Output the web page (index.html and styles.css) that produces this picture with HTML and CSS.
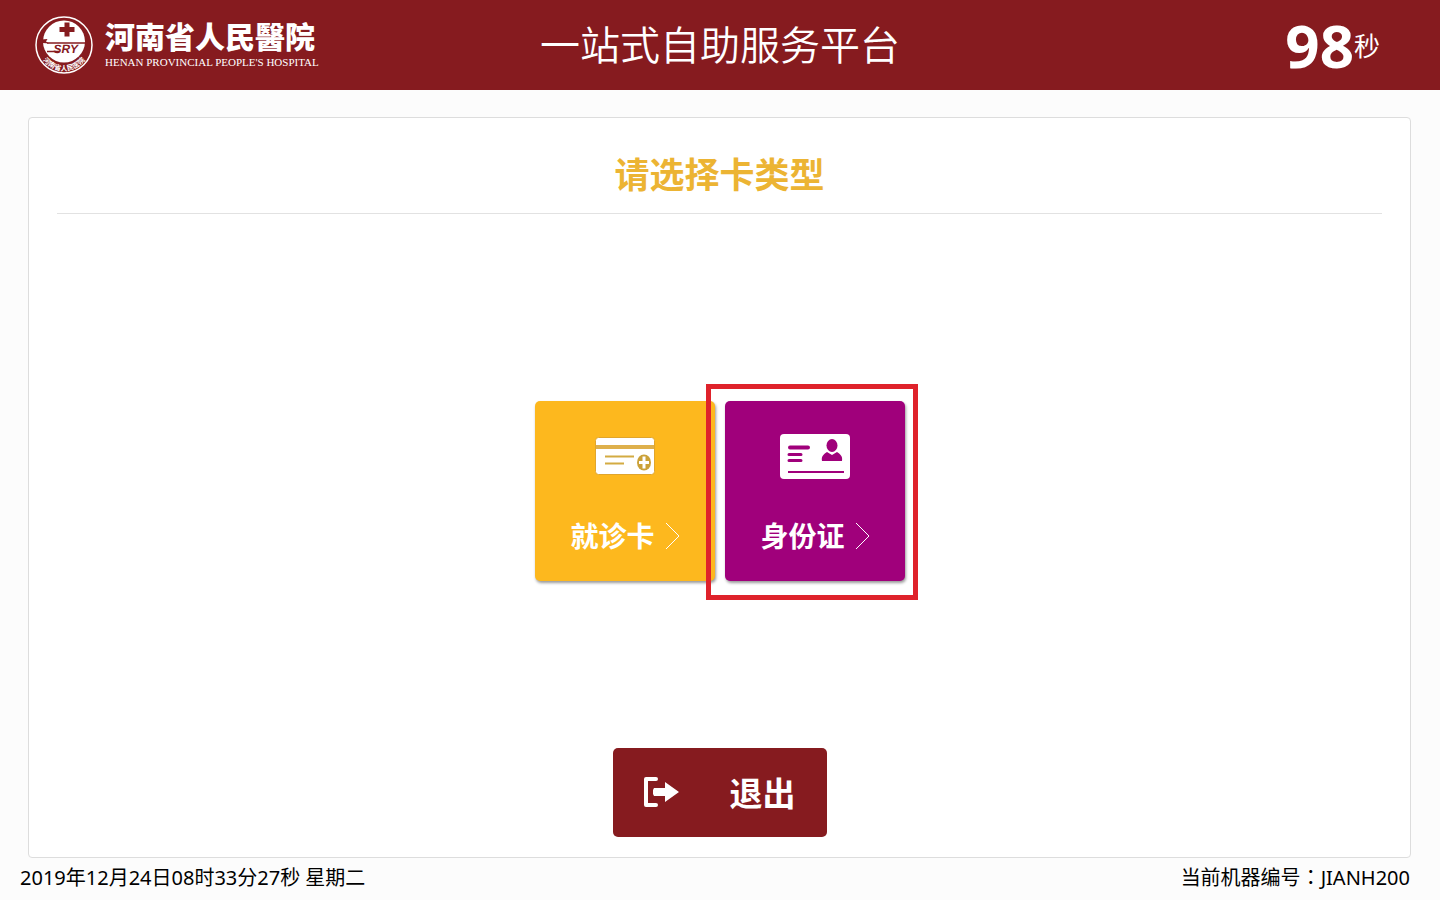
FILE: index.html
```html
<!DOCTYPE html>
<html lang="zh-CN">
<head>
  <meta charset="UTF-8">
  <title>一站式自助服务平台</title>
  <link rel="stylesheet" href="styles.css">
</head>
<body>
  <header class="header">
    <div class="logo">
      <svg class="emblem" viewBox="0 0 116 116">
        <circle cx="58" cy="58" r="56" fill="none" stroke="#fff" stroke-width="3"/>
        <circle cx="58" cy="51" r="42" fill="#fff"/>
        <!-- cross -->
        <path d="M59 13h10v9h10v10H69v9H59v-9H49V22h10z" fill="#861b1f"/>
        <!-- ribbon and letters -->
        <path d="M13 47l12-1-3 5 6 4-12-1zM98 74l8-10-1 20-12 2z" fill="#861b1f"/>
        <path d="M24 54H106" fill="none" stroke="#861b1f" stroke-width="3"/>
        <path d="M24 71H48" fill="none" stroke="#861b1f" stroke-width="3"/>
        <text class="emblem-name" x="37" y="73">SRY</text>
        <path id="arc" d="M9 75A52 52 0 0 0 107 75" fill="none"/>
        <text class="emblem-ring" text-anchor="middle"><textPath href="#arc" startOffset="50%">河南省人民医院</textPath></text>
      </svg>
      <div class="logo-text">
        <div class="logo-cn">河南省人民醫院</div>
        <div class="logo-en">HENAN PROVINCIAL PEOPLE'S HOSPITAL</div>
      </div>
    </div>
    <h1>一站式自助服务平台</h1>
    <div class="countdown"><b>98</b><span>秒</span></div>
  </header>

  <main class="panel">
    <h2>请选择卡类型</h2>
    <div class="cards">
      <button class="card card-visit">
        <svg class="card-icon" viewBox="0 0 70 46">
          <rect x="5.500" y="3.500" width="59" height="37" rx="3" fill="#fff" stroke="#e0a52c"/>
          <path d="M6 13h58" stroke="#deb04c" stroke-width="4"/>
          <path d="M15 22.500h29M15 29.500h19" stroke="#d3ab42" stroke-width="2"/>
          <ellipse cx="54" cy="28.500" rx="7" ry="8" fill="#cba138"/>
          <path d="M54 22.500v12M49 28.500h10" stroke="#fff" stroke-width="3"/>
        </svg>
        <span class="card-label">就诊卡
          <svg class="arrow" viewBox="0 0 16 28"><path d="M1 1l13 13L1 27"/></svg>
        </span>
      </button>
      <button class="card card-id">
        <svg class="card-icon" viewBox="0 0 70 46">
          <rect x="0" y="0" width="70" height="45" rx="4" fill="#fff"/>
          <path d="M10 13.500h18" stroke="#a0007b" stroke-width="4" stroke-linecap="round"/>
          <path d="M9 20.500h12M9 26.500h12" stroke="#a0007b" stroke-width="3" stroke-linecap="round"/>
          <path d="M8 38h56" stroke="#a0007b" stroke-width="2"/>
          <ellipse cx="52" cy="11.500" rx="5.500" ry="6.500" fill="#a0007b"/>
          <path d="M42 27c-1-5 2-7 5-9l5 3 5-3c3 2 6 4 5 9z" fill="#a0007b"/>
        </svg>
        <span class="card-label">身份证
          <svg class="arrow" viewBox="0 0 16 28"><path d="M1 1l13 13L1 27"/></svg>
        </span>
      </button>
    </div>
    <button class="exit">
      <svg class="exit-icon" viewBox="0 0 36 32">
        <path d="M12 3H2v26h10" fill="none" stroke="#fff" stroke-width="4" stroke-linecap="round" stroke-linejoin="round"/>
        <path d="M10 12h11V6l14 10-14 10v-6H10l-1-2v-4z" fill="#fff"/>
      </svg>
      <span>退出</span>
    </button>
  </main>

  <footer class="footer">
    <span>2019年12月24日08时33分27秒 星期二</span>
    <span>当前机器编号<span lang="zh-TW" class="colon">：</span>JIANH200</span>
  </footer>
</body>
</html>
```

FILE: styles.css
```css
* {
  box-sizing: border-box;
}
body {
  margin: 0;
  min-height: 100vh;
  display: flex;
  flex-direction: column;
  background: #fcfcfc;
  color: #000;
  font-family: "Noto Sans", "Noto Sans CJK SC", sans-serif;
}
h1,
h2 {
  margin: 0;
}
button {
  border: none;
  padding: 0;
  color: #fff;
  font-family: inherit;
  font-weight: bold;
  cursor: pointer;
}

/* header */
.header {
  display: grid;
  grid-template-columns: 1fr auto 1fr;
  align-items: center;
  height: 90px;
  padding: 0 60px;
  background: #861b1f;
  color: #fff;
}
.header h1 {
  padding-bottom: 4px;
  font-family: "Noto Sans CJK SC", sans-serif;
  font-size: 40px;
  line-height: 60px;
  font-weight: 350;
}
.logo {
  display: flex;
  align-items: center;
  gap: 12px;
  margin-left: -25px;
}
.emblem {
  width: 58px;
  height: 58px;
  text-rendering: geometricPrecision;
}
.emblem-name {
  font: italic bold 24px "Liberation Sans", sans-serif;
  fill: #861b1f;
}
.emblem-ring {
  font-size: 14px;
  font-weight: bold;
  fill: #fff;
}
.logo-cn {
  font-size: 30px;
  line-height: 34px;
  font-weight: 900;
}
.logo-en {
  font-family: "Liberation Serif", serif;
  font-size: 11px;
  line-height: 16px;
  white-space: nowrap;
}
.countdown {
  display: flex;
  justify-content: flex-end;
  align-items: center;
}
.countdown b {
  font-size: 60px;
  line-height: 80px;
}
.countdown span {
  font-size: 26px;
}

/* main panel */
.panel {
  flex: 1;
  display: flex;
  flex-direction: column;
  align-items: center;
  margin: 27px 29px 0 28px;
  padding: 0 28px 20px;
  background: #fff;
  border: 1px solid #ddd;
  border-radius: 4px;
}
.panel h2 {
  align-self: stretch;
  padding: 31px 0 13px;
  border-bottom: 1px solid #e2e2e2;
  color: #ecb433;
  font-size: 35px;
  line-height: 51px;
  text-align: center;
}
.cards {
  flex: 1;
  display: flex;
  align-items: center;
  gap: 10px;
  padding-top: 20px;
}
.card {
  position: relative;
  display: flex;
  flex-direction: column;
  align-items: center;
  gap: 32px;
  width: 180px;
  height: 180px;
  padding-top: 33px;
  border-radius: 5px;
  box-shadow: 1px 2px 3px rgba(0, 0, 0, 0.4);
}
.card-visit {
  background: #fdb81e;
}
.card-id {
  background: #a0007b;
}
.card-id::after {
  content: "";
  position: absolute;
  top: -17px;
  right: -13px;
  bottom: -19px;
  left: -19px;
  border: 5px solid #df222b;
}
.card-icon {
  width: 70px;
  height: 46px;
}
.card-label {
  display: flex;
  align-items: center;
  gap: 10px;
  padding-left: 2px;
  font-size: 28px;
  line-height: 48px;
}
.arrow {
  width: 16px;
  height: 28px;
  fill: none;
  stroke: #fff;
  stroke-width: 1;
}
.exit {
  display: flex;
  align-items: center;
  justify-content: center;
  gap: 50px;
  width: 214px;
  height: 89px;
  padding-bottom: 2px;
  background: #861b1f;
  border-radius: 5px;
  font-size: 33px;
}
.exit-icon {
  width: 36px;
  height: 32px;
}

/* footer */
.footer {
  display: flex;
  justify-content: space-between;
  padding: 5px 30px 7px 20px;
  font-size: 20px;
  line-height: 30px;
}
.colon {
  font-family: "Noto Sans CJK TC", sans-serif;
  line-height: 1;
}
```
